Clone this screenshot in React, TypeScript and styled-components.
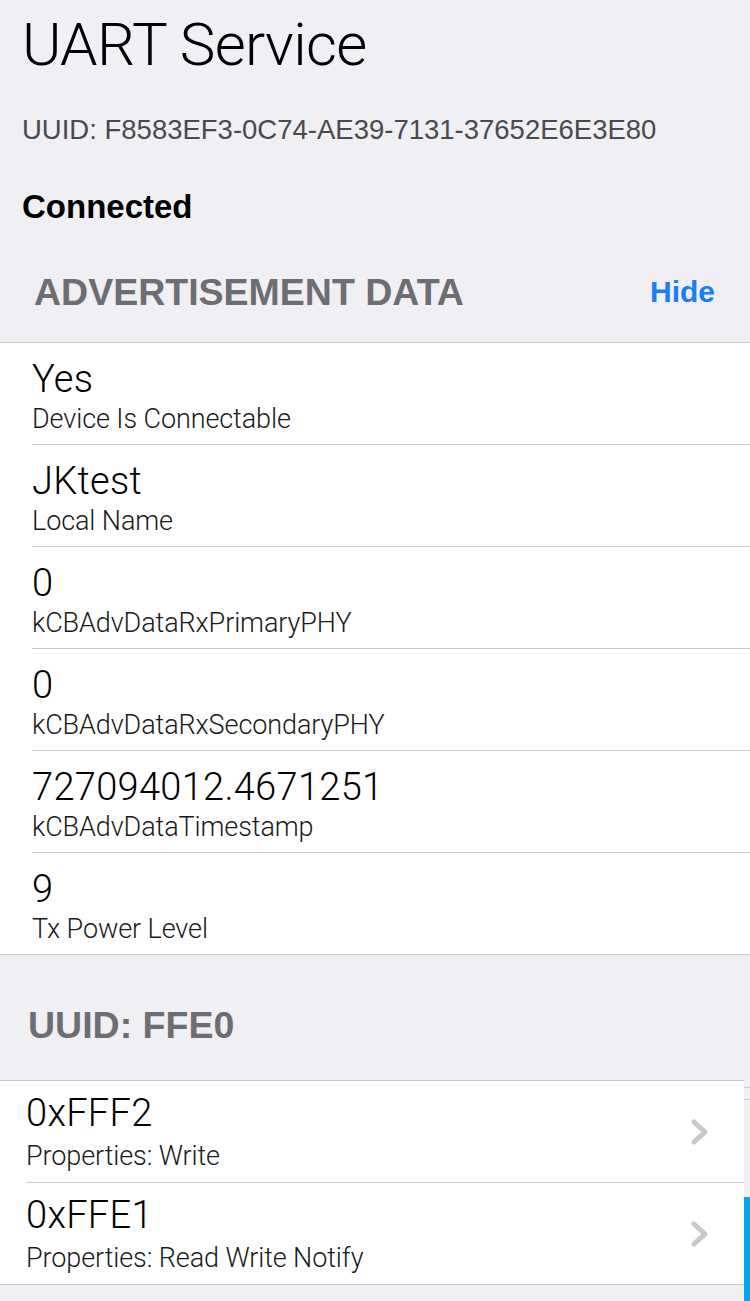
import React from 'react';
import styled, { createGlobalStyle } from 'styled-components';

// アドバタイズデータとキャラクタリスティックの一覧
interface InfoRow {
  value: string;
  label: string;
}

const advertisement: InfoRow[] = [
  { value: 'Yes', label: 'Device Is Connectable' },
  { value: 'JKtest', label: 'Local Name' },
  { value: '0', label: 'kCBAdvDataRxPrimaryPHY' },
  { value: '0', label: 'kCBAdvDataRxSecondaryPHY' },
  { value: '727094012.4671251', label: 'kCBAdvDataTimestamp' },
  { value: '9', label: 'Tx Power Level' },
];

const characteristics: InfoRow[] = [
  { value: '0xFFF2', label: 'Properties: Write' },
  { value: '0xFFE1', label: 'Properties: Read Write Notify' },
];

const Chevron: React.FC = () => (
  <ChevronSvg viewBox="0 0 20 28" width="20" height="28">
    <path d="M4 4 L15 14 L4 24" fill="none" stroke="#c7c7cc" strokeWidth="5" strokeLinecap="round" strokeLinejoin="round" />
  </ChevronSvg>
);

const App: React.FC = () => {
  return (
    <Page>
      <GlobalStyle />
      <Intro>
        <Title>UART Service</Title>
        <Uuid>UUID: F8583EF3-0C74-AE39-7131-37652E6E3E80</Uuid>
        <Status>Connected</Status>
      </Intro>

      <SectionHeader>
        <SectionTitle>ADVERTISEMENT DATA</SectionTitle>
        <HideButton>Hide</HideButton>
      </SectionHeader>
      <Card>
        {advertisement.map((row, i) => (
          <Row key={i} inset={32} last={i === advertisement.length - 1}>
            <RowText>
              <Value>{row.value}</Value>
              <Label>{row.label}</Label>
            </RowText>
          </Row>
        ))}
      </Card>

      <ServiceHeader>
        <SectionTitle>UUID: FFE0</SectionTitle>
      </ServiceHeader>
      <CharacteristicArea>
        <Card>
          {characteristics.map((row, i) => (
            <Row key={i} inset={26} last={i === characteristics.length - 1} compact>
              <RowText compact>
                <Value>{row.value}</Value>
                <Label>{row.label}</Label>
              </RowText>
              <Chevron />
            </Row>
          ))}
        </Card>
        <SideStrip>
          <StripLine />
          <StripLine />
        </SideStrip>
      </CharacteristicArea>

      <ScrollIndicator />
    </Page>
  );
};

export default App;


const GlobalStyle = createGlobalStyle`
  body {
    margin: 0;
    background: #efeff4;
    font-family: Roboto, "Liberation Sans", sans-serif;
  }
`;

const Page = styled.div`
  position: relative;
  width: 750px;
  min-height: 1301px;
  background: #efeff4;
  overflow: hidden;
`;

const Intro = styled.div`
  display: flex;
  flex-direction: column;
  padding: 10px 22px 0;
`;

const Title = styled.h1`
  margin: 0;
  font-size: 60px;
  font-weight: 300;
  line-height: 70px;
  color: #000;
  letter-spacing: -0.7px;
`;

const Uuid = styled.div`
  margin-top: 35px;
  font-family: "Liberation Sans", Arial, sans-serif;
  font-size: 27.5px;
  line-height: 30px;
  color: #4a4a4d;
`;

const Status = styled.div`
  margin-top: 45px;
  font-family: "Liberation Sans", Arial, sans-serif;
  font-size: 33px;
  font-weight: 700;
  line-height: 34px;
  color: #000;
`;

const SectionHeader = styled.div`
  display: flex;
  justify-content: space-between;
  align-items: flex-end;
  height: 118px;
  box-sizing: border-box;
  padding: 0 35px 31px 34px;
`;

const ServiceHeader = styled(SectionHeader)`
  height: 125px;
  padding: 0 28px 36px 28px;
`;

const SectionTitle = styled.div`
  font-family: "Liberation Sans", Arial, sans-serif;
  font-size: 37.5px;
  font-weight: 700;
  line-height: 38px;
  color: #6d6d72;
`;

const HideButton = styled.button`
  border: none;
  background: none;
  padding: 0;
  font-family: "Liberation Sans", Arial, sans-serif;
  font-size: 30px;
  font-weight: 700;
  line-height: 38px;
  color: #1a7ef4;
`;

const Card = styled.div`
  flex: 1;
  background: #fff;
  border-top: 1px solid #c8c7cc;
  border-bottom: 1px solid #c8c7cc;
`;

const Row = styled.div<{ inset: number; last?: boolean; compact?: boolean }>`
  display: flex;
  align-items: flex-start;
  height: ${(p) => (p.last ? 101 : 102)}px;
  box-sizing: border-box;
  margin-left: ${(p) => p.inset}px;
  padding: ${(p) => (p.compact ? '11px 34px 0 0' : '15px 34px 0 0')};
  border-bottom: ${(p) => (p.last ? 'none' : '1px solid #c8c7cc')};
`;

const RowText = styled.div<{ compact?: boolean }>`
  flex: 1;
  display: flex;
  flex-direction: column;
  gap: ${(p) => (p.compact ? 6 : 3)}px;
`;

const Value = styled.div`
  font-size: 38px;
  font-weight: 300;
  line-height: 42px;
  color: #000;
  letter-spacing: 0.3px;
  font-variant-numeric: tabular-nums;
`;

const Label = styled.div`
  font-size: 27px;
  font-weight: 300;
  line-height: 32px;
  color: #1a1a1a;
  letter-spacing: -0.1px;
`;

const ChevronSvg = styled.svg`
  flex: none;
  display: block;
  align-self: center;
  margin-top: -10px;
`;

const CharacteristicArea = styled.div`
  display: flex;
  width: 750px;
`;

const SideStrip = styled.div`
  width: 6px;
  display: flex;
  flex-direction: column;
  gap: 11px;
  padding-top: 7px;
`;

const StripLine = styled.div`
  height: 1px;
  background: #c8c7cc;
`;

const ScrollIndicator = styled.div`
  position: absolute;
  right: 0;
  top: 1197px;
  width: 6px;
  height: 104px;
  background: #00a8f0;
`;
